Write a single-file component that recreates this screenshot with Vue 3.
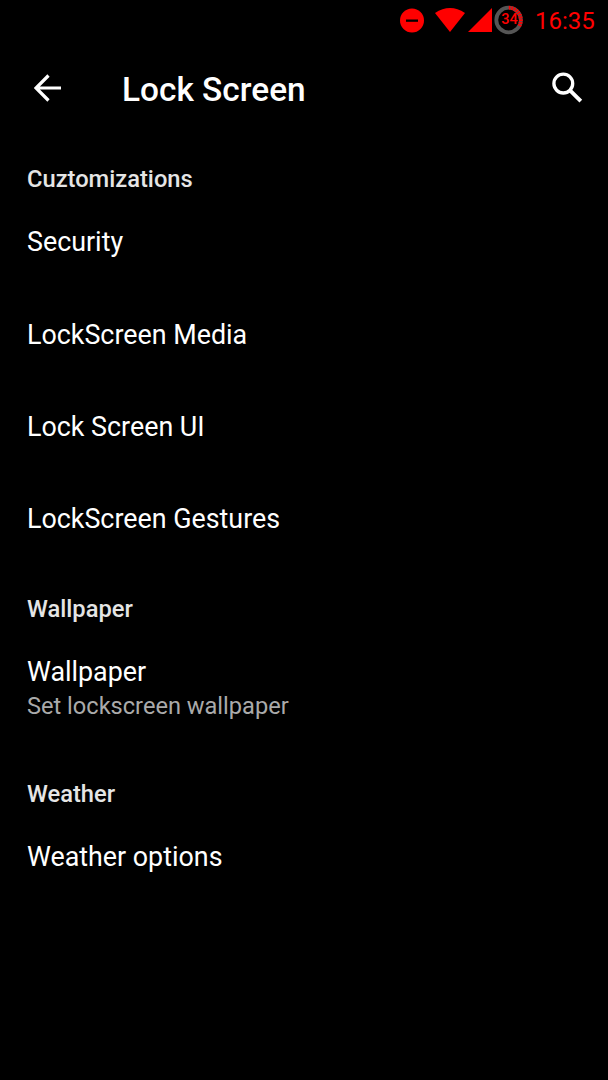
<script setup>
const sections = [
  { title: 'Cuztomizations', items: [{ name: 'Security' }, { name: 'LockScreen Media' }, { name: 'Lock Screen UI' }, { name: 'LockScreen Gestures' }] },
  { title: 'Wallpaper', items: [{ name: 'Wallpaper', note: 'Set lockscreen wallpaper' }] },
  { title: 'Weather', items: [{ name: 'Weather options' }] },
]
</script>

<template>
  <main class="screen">
    <div class="status">
      <svg class="indicators" width="126" height="41" viewBox="399 0 126 41">
        <circle cx="412" cy="20.6" r="12" fill="#f00" />
        <rect x="406" y="19.5" width="12" height="2.3" fill="#000" />
        <path d="M435 13 Q450 3.2 465 13 L450 32Z" fill="#f00" />
        <path d="M468 32 L492 8 V32Z" fill="#f00" />
        <circle cx="508.6" cy="20" r="12.3" fill="none" stroke="#555" stroke-width="3.8" />
        <path d="M508.8 7.7 A12.3 12.3 0 0 1 519 26.5" fill="none" stroke="#f00" stroke-width="3.8" stroke-dasharray="1.7 .9" />
        <text x="509.4" y="24.4" text-anchor="middle" class="level">34</text>
      </svg>
      <time>16:35</time>
    </div>
    <header>
      <svg class="back" width="28" height="28" viewBox="0 0 28 28"><path d="M27 14H3M14.5 1.5L2 14l12.5 12.5" fill="none" stroke="#fff" stroke-width="3.2" /></svg>
      <h1>Lock Screen</h1>
      <svg class="search" width="32" height="32" viewBox="0 0 32 32"><circle cx="11.3" cy="11.6" r="9.4" fill="none" stroke="#fff" stroke-width="3.3" /><path d="M18 18.3L28.8 29.1" stroke="#fff" stroke-width="3.9" /></svg>
    </header>
    <section v-for="section in sections" :key="section.title">
      <h2>{{ section.title }}</h2>
      <div v-for="item in section.items" :key="item.name" class="item" :class="{ detailed: item.note }">
        <div class="name">{{ item.name }}</div>
        <div v-if="item.note" class="note">{{ item.note }}</div>
      </div>
    </section>
  </main>
</template>

<style>
html, body { margin: 0; background: #000; }
</style>
<style scoped>
.screen { height: 1080px; overflow: hidden; background: #000; color: #fff; font-family: Roboto, sans-serif; }
.status { height: 41px; display: flex; align-items: center; padding-left: 399px; color: #f00; }
.indicators { flex: none; }
.level { font-size: 14.5px; font-weight: 500; fill: #f00; }
time { margin-left: 10px; padding-top: 2px; font-size: 24px; line-height: 41px; }
header { display: flex; align-items: center; height: 95px; padding: 0 24px 0 34px; box-sizing: border-box; }
.back, .search { margin-bottom: 2px; }
h1 { flex: 1; margin: 0 0 0 60px; font-size: 33.4px; font-weight: 500; line-height: 40px; padding-top: 2px; }
section { padding-bottom: .6px; }
h2 { margin: 0; height: 60px; padding: 27px 27px 0; box-sizing: border-box; font-size: 23.7px; font-weight: 500; line-height: 32px; color: #e5e5e5; }
.item { height: 92.25px; padding: 29.4px 27px 0; box-sizing: border-box; }
.item.detailed { height: 124.6px; }
.name { font-size: 26.85px; line-height: 34px; }
.note { font-size: 23.6px; line-height: 34px; color: #aaa; }
</style>
